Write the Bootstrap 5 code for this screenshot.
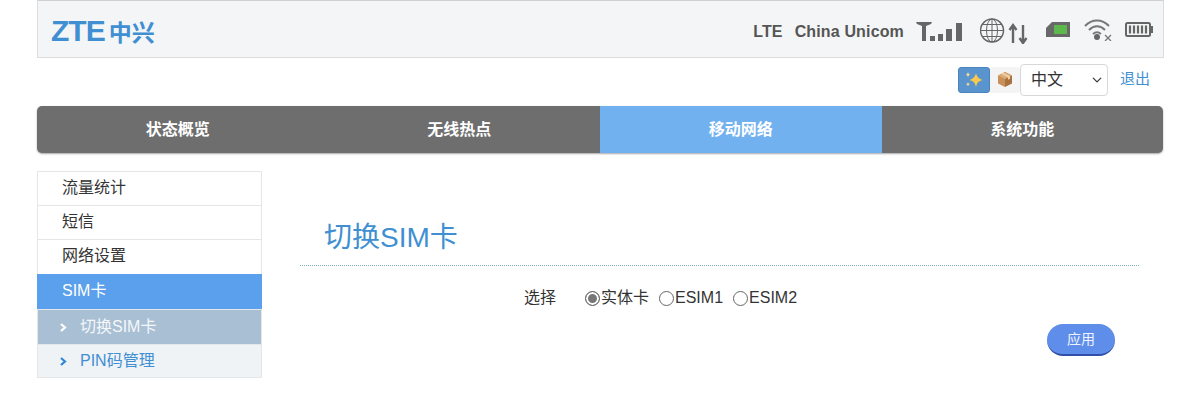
<!DOCTYPE html>
<html lang="zh">
<head>
  <meta charset="UTF-8">
  <meta name="viewport" content="width=device-width, initial-scale=1.0">
  <title>切换SIM卡</title>
  <link href="https://cdn.jsdelivr.net/npm/bootstrap@5.3.0/dist/css/bootstrap.min.css" rel="stylesheet">
  <script src="https://cdn.jsdelivr.net/npm/bootstrap@5.3.0/dist/js/bootstrap.bundle.min.js"></script>
  <style>
    body {
      background: #fff;
      color: #333;
      font-family: "Liberation Sans", "Noto Sans CJK SC", sans-serif;
      font-size: 16px;
      overflow: hidden;
    }
    .page-wrap { width: 1127px; margin-left: 37px; }

    /* top bar */
    .top-bar {
      height: 58px;
      background: #f4f5f6;
      border: 1px solid #dcdcdc;
      border-top-color: #d0d0d0;
      padding: 3px 10px 0 13px;
    }
    .zte-logo { color: #3f8fd2; line-height: 1; white-space: nowrap; }
    .zte-latin { font-size: 30px; font-weight: 700; letter-spacing: -1px; }
    .zte-cjk { font-size: 23px; font-weight: 700; margin-left: 4px; }
    .status-group { padding-top: 2px; }
    .net-text { font-size: 16px; font-weight: 700; color: #555; letter-spacing: .15px; }
    .net-mode { margin-right: 12px; }
    .net-name { margin-right: 12px; }
    .ic-signal { margin-right: 16px; }
    .ic-globe { margin-right: 18px; margin-bottom: 2px; }
    .ic-sim { margin-right: 14px; margin-bottom: 4px; }
    .ic-wifi { margin-right: 13px; margin-bottom: 4px; }
    .ic-battery { margin-bottom: 4px; }

    /* language row */
    .lang-row { height: 48px; padding: 0 14px 5px 0; }
    .tool-on {
      width: 32px; height: 26px;
      background: #5a94cf;
      border: 1px solid #4b84bd;
      border-radius: 3px;
    }
    .tool-off { width: 30px; height: 26px; background: #f4f4f4; border-radius: 3px; }
    .lang-select {
      width: 88px; height: 32px;
      padding: 0 24px 0 10px;
      margin-right: 12px;
      font-size: 16px;
      color: #333;
      border-color: #d8d8d8;
      border-radius: 4px;
      background-position: right 4px center;
      background-size: 12px 10px;
    }
    .logout-link { color: #3f8fd2; font-size: 15px; text-decoration: none; }

    /* main nav */
    .main-tabs {
      height: 47px;
      background: #6e6e6e;
      border-radius: 5px;
      box-shadow: 0 1px 2px rgba(0, 0, 0, .35);
      overflow: hidden;
      width: 1126px;
    }
    .main-tabs a {
      flex: 1 1 0;
      color: #fff;
      font-size: 16px;
      font-weight: 700;
      text-decoration: none;
      display: flex;
      align-items: center;
      justify-content: center;
    }
    .main-tabs a.tab-on { background: #71b1ef; }

    /* side menu */
    .content-row { padding-top: 18px; }
    .side-menu { width: 225px; flex: none; }
    .side-menu a {
      display: block;
      height: 34px;
      line-height: 32px;
      padding-left: 24px;
      font-size: 16px;
      color: #333;
      text-decoration: none;
      border: 1px solid #e4e6e8;
      border-bottom-width: 0;
    }
    .side-menu a.side-tall { height: 35px; }
    .side-menu a.side-on {
      height: 35px;
      background: #5ba0ec;
      border-color: #5ba0ec;
      color: #fff;
      line-height: 31px;
    }
    .side-menu a.sub-item {
      padding-left: 22px;
      background: #eff3f6;
      color: #3f8fd2;
      border-bottom-width: 1px;
      height: 34px;
      display: flex;
      align-items: center;
      gap: 13px;
    }
    .side-menu a.sub-on {
      background: #a9bfd3;
      color: #f4f7fa;
      border-bottom-width: 0;
      height: 35px;
    }
    .sub-arrow { flex: none; }

    /* main panel */
    .form-panel { padding-left: 38px; width: 877px; }
    .panel-title {
      margin: 0;
      padding: 46px 0 0 24px;
      height: 95px;
      line-height: 42px;
      font-size: 28px;
      font-weight: 400;
      color: #3f8fd2;
      border-bottom: 1px dotted #7fb3c4;
      box-sizing: border-box;
    }
    .option-row { padding-top: 6px; padding-left: 224px; height: 58px; line-height: 20px; }
    .option-label { width: 61px; }
    .sim-radio {
      width: 15px; height: 15px;
      margin: 0 1px 0 0;
      flex: none;
      appearance: none;
      border: 1px solid #666;
      border-radius: 50%;
      background: #fff;
    }
    .sim-radio:checked { box-shadow: inset 0 0 0 2px #fff; background: #777; }
    .sim-opt { margin-right: 10px; }
    .apply-row { padding-right: 24px; }
    .apply-btn {
      width: 68px; height: 32px;
      padding: 0;
      font-size: 14px;
      color: #eef3ff;
      background: #5f8eea;
      border: 0;
      border-bottom: 2px solid #2f4fa8;
      border-radius: 16px;
    }
  </style>
</head>
<body>
  <div class="page-wrap">

    <!-- Top status bar -->
    <div class="top-bar d-flex align-items-center justify-content-between">
      <div class="zte-logo"><span class="zte-latin">ZTE</span><span class="zte-cjk">中兴</span></div>
      <div class="status-group d-flex align-items-center">
        <span class="net-text net-mode">LTE</span>
        <span class="net-text net-name">China Unicom</span>
        <svg class="ic-signal" width="48" height="20" viewBox="0 0 48 20" fill="#666">
          <path d="M0 0h16l-1 2-5 2v15H6V4L1 2z"/>
          <rect x="14" y="14" width="5" height="5"/><rect x="22" y="12" width="5" height="7"/>
          <rect x="30" y="7" width="6" height="12"/><rect x="40" y="1" width="6" height="18"/>
        </svg>
        <svg class="ic-globe" width="48" height="26" viewBox="0 0 48 26" fill="none" stroke="#666">
          <circle cx="12" cy="12.500" r="11.500" stroke-width="1.500"/>
          <ellipse cx="12" cy="12.500" rx="5.500" ry="11.500"/>
          <path d="M12 1v23M1 12.500h22M2.500 6.500h19M2.500 18.500h19"/>
          <path d="M33 25V8M29.500 12L33 7l3.500 5" stroke-width="2.400"/>
          <path d="M43 7v17M39.500 20l3.500 5 3.500-5" stroke-width="2.400"/>
        </svg>
        <svg class="ic-sim" width="24" height="15" viewBox="0 0 24 15">
          <path d="M6 0h18v15H0V6z" fill="#686868"/>
          <rect x="8" y="3" width="13" height="9" fill="#5cb84a"/>
        </svg>
        <svg class="ic-wifi" width="28" height="22" viewBox="0 0 28 22" fill="none" stroke="#777" stroke-width="2">
          <path d="M1 7c7-7.500 17-7.500 24 0M5 11c5-5 11-5 16 0M9 15c3-2.500 5-2.500 8 0"/>
          <circle cx="13" cy="18" r="3" fill="#666" stroke="none"/>
          <path d="M21 16l6 6M27 16l-6 6" stroke-width="1.300"/>
        </svg>
        <svg class="ic-battery" width="28" height="15" viewBox="0 0 28 15" fill="none">
          <rect x="1" y="1" width="24" height="13" rx="1.500" stroke="#666" stroke-width="2"/>
          <rect x="25.500" y="4" width="2.500" height="7" fill="#666"/>
          <path d="M5 3.500v8M9 3.500v8M13 3.500v8M17 3.500v8M21 3.500v8" stroke="#666" stroke-width="2.200"/>
        </svg>
      </div>
    </div>

    <!-- Tools and language -->
    <div class="lang-row d-flex align-items-center justify-content-end">
      <span class="tool-on d-flex align-items-center justify-content-center">
        <svg width="20" height="18" viewBox="0 0 20 18">
          <path d="M12 2c1 4 2.500 5.500 6.500 7-4 1-5.500 2.500-6.500 7-1-4.500-2.500-6-6.500-7 4-1.500 5.500-3 6.500-7z" fill="#fbc94b"/>
          <path d="M4 1c.4 1.700 1 2.300 2.500 2.800C5 4.200 4.400 4.800 4 6.500 3.600 4.800 3 4.200 1.500 3.800 3 3.300 3.600 2.700 4 1zM4 11c.3 1.300.8 1.800 2 2.200-1.200.4-1.700.9-2 2.300-.3-1.400-.8-1.900-2-2.300 1.200-.4 1.700-.9 2-2.200z" fill="#f6dc8f"/>
        </svg>
      </span>
      <span class="tool-off d-flex align-items-center justify-content-center">
        <svg width="16" height="17" viewBox="0 0 16 17">
          <path d="M8 1l7 3.500v8L8 16z" fill="#a9713f"/>
          <path d="M8 1L1 4.500v8L8 16z" fill="#c98f58"/>
          <path d="M1 4.500L8 8l7-3.500L8 1z" fill="#dcaa75"/>
          <path d="M4 2.800l7 3.500v2.500l2-1V5.300L6 1.800z" fill="#efd3ad"/>
        </svg>
      </span>
      <select class="form-select lang-select">
        <option>中文</option>
        <option>English</option>
      </select>
      <a href="#" class="logout-link">退出</a>
    </div>

    <!-- Main navigation -->
    <nav class="main-tabs d-flex">
      <a href="#">状态概览</a>
      <a href="#">无线热点</a>
      <a href="#" class="tab-on">移动网络</a>
      <a href="#">系统功能</a>
    </nav>

    <div class="content-row d-flex">
      <!-- Side menu -->
      <div class="side-menu">
        <a href="#">流量统计</a>
        <a href="#">短信</a>
        <a href="#" class="side-tall">网络设置</a>
        <a href="#" class="side-on">SIM卡</a>
        <a href="#" class="sub-item sub-on">
          <svg class="sub-arrow" width="7" height="9" viewBox="0 0 7 9"><path d="M1 1l4 3.500-4 3.500" fill="none" stroke="#fff" stroke-width="2.200"/></svg>
          切换SIM卡
        </a>
        <a href="#" class="sub-item">
          <svg class="sub-arrow" width="7" height="9" viewBox="0 0 7 9"><path d="M1 1l4 3.500-4 3.500" fill="none" stroke="#2f86d8" stroke-width="2.200"/></svg>
          PIN码管理
        </a>
      </div>

      <!-- Form -->
      <div class="form-panel">
        <h1 class="panel-title">切换SIM卡</h1>
        <div class="option-row d-flex align-items-center">
          <span class="option-label">选择</span>
          <label class="d-flex align-items-center sim-opt"><input class="sim-radio" type="radio" name="sim" checked>实体卡</label>
          <label class="d-flex align-items-center sim-opt"><input class="sim-radio" type="radio" name="sim">ESIM1</label>
          <label class="d-flex align-items-center sim-opt"><input class="sim-radio" type="radio" name="sim">ESIM2</label>
        </div>
        <div class="apply-row d-flex justify-content-end">
          <button type="button" class="btn apply-btn">应用</button>
        </div>
      </div>
    </div>

  </div>
</body>
</html>
